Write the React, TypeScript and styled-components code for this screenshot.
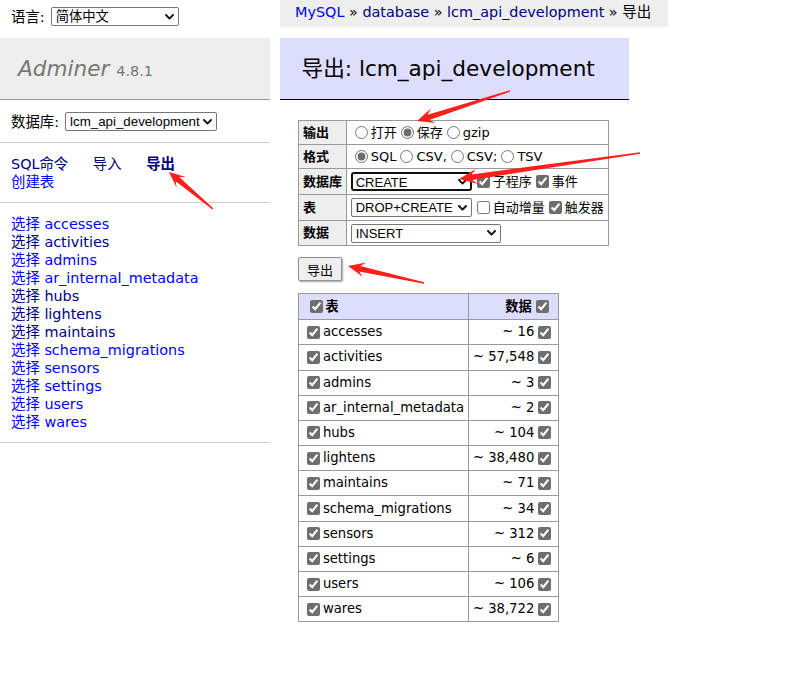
import React from "react";
import styled, { createGlobalStyle } from "styled-components";

const FONT = `"DejaVu Sans", "Noto Sans CJK SC", sans-serif`;
const SELECT_FONT = `"Liberation Sans", "Noto Sans CJK SC", sans-serif`;

const GlobalStyle = createGlobalStyle`
  html, body { margin: 0; padding: 0; background: #fff; }
  body {
    color: #000;
    font-family: ${FONT};
    font-size: 14.4px;
    line-height: 18px;
  }
`;

const Page = styled.div`
  position: relative;
  display: flex;
  align-items: flex-start;
  column-gap: 10px;
  width: 794px;
  min-height: 683px;
`;

/* ---------- left menu ---------- */

const Menu = styled.nav`
  flex: none;
  width: 270px;
`;

const LangBar = styled.div`
  display: flex;
  align-items: center;
  column-gap: 6px;
  height: 19px;
  padding: 7px 11px 12px;
  white-space: nowrap;
`;

const SelectBox = styled.span<{ $mr?: number }>`
  position: relative;
  display: inline-flex;
  flex: none;
  margin-right: ${(p) => p.$mr ?? 0}px;
`;

const Select = styled.select<{ $w: number; $fs: number; $focus?: boolean }>`
  appearance: none;
  -webkit-appearance: none;
  box-sizing: border-box;
  width: ${(p) => p.$w}px;
  height: 19px;
  margin: 0;
  padding: 0 14px 0 ${(p) => (p.$focus ? 3 : 4)}px;
  font-family: ${SELECT_FONT};
  font-size: ${(p) => p.$fs}px;
  line-height: 17px;
  color: #000;
  background: #fff;
  border: ${(p) => (p.$focus ? "2px solid #111" : "1px solid #767676")};
  border-radius: ${(p) => (p.$focus ? 3 : 2)}px;
  outline: none;
`;

const Chevron = styled.svg`
  position: absolute;
  right: 5px;
  top: 50%;
  width: 9px;
  height: 6px;
  margin-top: -3px;
  pointer-events: none;
`;

type DropProps = {
  w: number;
  fs: number;
  focus?: boolean;
  mr?: number;
  value: string;
  options: string[];
};

function Drop({ w, fs, focus, mr, value, options }: DropProps) {
  return (
    <SelectBox $mr={mr}>
      <Select $w={w} $fs={fs} $focus={focus} defaultValue={value}>
        {options.map((o) => (
          <option key={o} value={o}>
            {o}
          </option>
        ))}
      </Select>
      <Chevron viewBox="0 0 9 6">
        <path d="M1 1 L4.5 4.6 L8 1" fill="none" stroke="#111" strokeWidth="1.9" strokeLinecap="round" strokeLinejoin="round" />
      </Chevron>
    </SelectBox>
  );
}

const Logo = styled.h1`
  margin: 0;
  height: 27px;
  padding: 17px 18px 17px;
  font-size: 21.6px;
  line-height: 27px;
  font-weight: normal;
  color: #777;
  background: #eee;
  border-bottom: 1px solid #999;
  white-space: nowrap;
`;

const LogoLink = styled.a`
  color: #777;
  font-style: italic;
  text-decoration: none;
`;

const Version = styled.span`
  font-size: 14.4px;
  line-height: 1;
  color: #777;
`;

const MenuBlock = styled.div`
  padding: 12px 11px 11px;
  border-bottom: 1px solid #ccc;
`;

const FieldRow = styled.div`
  display: flex;
  align-items: center;
  column-gap: 6px;
  height: 19px;
  white-space: nowrap;
`;

const MenuLink = styled.a<{ $visited?: boolean; $active?: boolean }>`
  color: ${(p) => (p.$visited ? "#000080" : "#0000ff")};
  font-weight: ${(p) => (p.$active ? "bold" : "normal")};
  text-decoration: none;
  margin-right: 20px;
`;

const TableList = styled.ul`
  list-style: none;
  margin: 0;
  padding: 0;
`;

const TableItem = styled.li`
  white-space: nowrap;
`;

const ItemLink = styled.a<{ $visited?: boolean }>`
  color: ${(p) => (p.$visited ? "#000080" : "#0000ff")};
  text-decoration: none;
`;

/* ---------- main column ---------- */

const Main = styled.main`
  display: flex;
  flex-direction: column;
  align-items: flex-start;
`;

const Breadcrumb = styled.p`
  margin: 0;
  height: 27px;
  line-height: 25px;
  padding: 0 17px 0 15px;
  background: #eee;
  white-space: nowrap;
`;

const Crumb = styled.a<{ $visited?: boolean }>`
  color: ${(p) => (p.$visited ? "#000080" : "#0000ff")};
  text-decoration: none;
`;

const Content = styled.section`
  margin-top: 11px;
`;

const Title = styled.h2`
  margin: 0 0 20px;
  padding: 17px 21.6px 17px;
  font-size: 21.6px;
  line-height: 27px;
  font-weight: normal;
  color: #000;
  background: #ddf;
  border-bottom: 1px solid #000;
  white-space: nowrap;
`;

const Body = styled.div`
  padding: 0 20px 20px 18px;
`;

const Grid = styled.table<{ $fs: number }>`
  border-collapse: collapse;
  font-size: ${(p) => p.$fs}px;
  line-height: 16px;
`;

const Th = styled.th<{ $head?: boolean; $right?: boolean }>`
  border: 1px solid #999;
  background: ${(p) => (p.$head ? "#ddf" : "#eee")};
  padding: ${(p) => (p.$head ? "2.6px 6.5px" : "2.6px 3.9px")};
  text-align: ${(p) => (p.$right ? "right" : "left")};
  font-weight: bold;
  white-space: nowrap;
`;

const Td = styled.td`
  border: 1px solid #999;
  padding: 2.6px 3.9px;
  white-space: nowrap;
`;

const CellRow = styled.div<{ $h: number; $right?: boolean }>`
  display: flex;
  align-items: center;
  justify-content: ${(p) => (p.$right ? "flex-end" : "flex-start")};
  height: ${(p) => p.$h}px;
`;

const Choice = styled.label`
  display: inline-flex;
  align-items: center;
`;

const Radio = styled.input.attrs({ type: "radio" })`
  width: 13px;
  height: 13px;
  margin: 0 3px 0 4px;
  accent-color: #6e6e6e;
  flex: none;
`;

const Check = styled.input.attrs({ type: "checkbox" })`
  width: 13px;
  height: 13px;
  margin: 0 3px 0 4px;
  accent-color: #6e6e6e;
  flex: none;
`;

const SubmitBar = styled.div`
  display: flex;
  margin: 11px 0 12px;
`;

const Button = styled.button`
  box-sizing: border-box;
  width: 44px;
  height: 24px;
  padding: 0;
  font-family: ${FONT};
  font-size: 13px;
  color: #000;
  background: #efefef;
  border: 1px solid #8f8f8f;
  border-radius: 2px;
  box-shadow: 1px 1px 2px rgba(0, 0, 0, 0.35);
`;

const Overlay = styled.svg`
  position: absolute;
  left: 0;
  top: 0;
  pointer-events: none;
`;

const arrowPoints = (
  tx: number,
  ty: number,
  px: number,
  py: number,
  head = 17,
  hw = 7.5,
  sw = 2.8,
  tw = 0.7
) => {
  const dx = px - tx;
  const dy = py - ty;
  const L = Math.hypot(dx, dy);
  const ux = dx / L;
  const uy = dy / L;
  const nx = -uy;
  const ny = ux;
  const bx = px - ux * head;
  const by = py - uy * head;
  const cx = px - ux * (head - 5);
  const cy = py - uy * (head - 5);
  const pts = [
    [px, py],
    [bx + nx * hw, by + ny * hw],
    [cx + nx * sw, cy + ny * sw],
    [tx + nx * tw, ty + ny * tw],
    [tx - nx * tw, ty - ny * tw],
    [cx - nx * sw, cy - ny * sw],
    [bx - nx * hw, by - ny * hw],
  ];
  return pts.map((p) => p.map((v) => v.toFixed(1)).join(",")).join(" ");
};

const arrows = [
  { t: [510, 91], p: [417, 121], head: 17, hw: 7.5 },
  { t: [213, 209], p: [169, 172], head: 16, hw: 7 },
  { t: [640, 153], p: [459, 179], head: 18, hw: 7.5 },
  { t: [424, 283], p: [348, 266], head: 17, hw: 7.5 },
];

const tables: [string, string, boolean][] = [
  ["accesses", "16", false],
  ["activities", "57,548", true],
  ["admins", "3", false],
  ["ar_internal_metadata", "2", false],
  ["hubs", "104", true],
  ["lightens", "38,480", true],
  ["maintains", "71", true],
  ["schema_migrations", "34", false],
  ["sensors", "312", false],
  ["settings", "6", false],
  ["users", "106", false],
  ["wares", "38,722", false],
];

const CREATE_OPTS = ["", "DROP+CREATE", "CREATE"];
const DATA_OPTS = ["", "TRUNCATE+INSERT", "INSERT", "INSERT+UPDATE"];

export default function App() {
  return (
    <Page>
      <GlobalStyle />
      <Menu>
        <LangBar>
          <span>语言:</span>
          <Drop w={128} fs={13.33} value="简体中文" options={["简体中文", "English"]} />
        </LangBar>
        <Logo>
          <LogoLink href="#">Adminer</LogoLink> <Version>4.8.1</Version>
        </Logo>
        <MenuBlock>
          <FieldRow>
            <span>数据库:</span>
            <Drop w={152} fs={13.33} value="lcm_api_development" options={["lcm_api_development"]} />
          </FieldRow>
        </MenuBlock>
        <MenuBlock>
          <MenuLink $visited href="#">SQL命令</MenuLink>{" "}
          <MenuLink $visited href="#">导入</MenuLink>{" "}
          <MenuLink $visited $active href="#">导出</MenuLink>
          <br />
          <MenuLink href="#">创建表</MenuLink>
        </MenuBlock>
        <MenuBlock>
          <TableList>
            {tables.map(([name, , visited]) => (
              <TableItem key={name}>
                <ItemLink $visited={visited} href="#">选择</ItemLink>{" "}
                <ItemLink $visited={visited} href="#">{name}</ItemLink>
              </TableItem>
            ))}
          </TableList>
        </MenuBlock>
      </Menu>

      <Main>
        <Breadcrumb>
          <Crumb href="#">MySQL</Crumb> » <Crumb $visited href="#">database</Crumb> »{" "}
          <Crumb $visited href="#">lcm_api_development</Crumb> » 导出
        </Breadcrumb>
        <Content>
          <Title>导出: lcm_api_development</Title>
          <Body>
            <Grid $fs={13}>
              <tbody>
                <tr>
                  <Th>输出</Th>
                  <Td>
                    <CellRow $h={18}>
                      <Choice><Radio name="output" />打开</Choice>
                      <Choice><Radio name="output" defaultChecked />保存</Choice>
                      <Choice><Radio name="output" />gzip</Choice>
                    </CellRow>
                  </Td>
                </tr>
                <tr>
                  <Th>格式</Th>
                  <Td>
                    <CellRow $h={18}>
                      <Choice><Radio name="format" defaultChecked />SQL</Choice>
                      <Choice><Radio name="format" />CSV,</Choice>
                      <Choice><Radio name="format" />CSV;</Choice>
                      <Choice><Radio name="format" />TSV</Choice>
                    </CellRow>
                  </Td>
                </tr>
                <tr>
                  <Th>数据库</Th>
                  <Td>
                    <CellRow $h={19.5}>
                      <Drop w={121} fs={13} focus mr={1} value="CREATE" options={CREATE_OPTS} />
                      <Choice><Check defaultChecked />子程序</Choice>
                      <Choice><Check defaultChecked />事件</Choice>
                    </CellRow>
                  </Td>
                </tr>
                <tr>
                  <Th>表</Th>
                  <Td>
                    <CellRow $h={20}>
                      <Drop w={121} fs={13} mr={1} value="DROP+CREATE" options={CREATE_OPTS} />
                      <Choice><Check />自动增量</Choice>
                      <Choice><Check defaultChecked />触发器</Choice>
                    </CellRow>
                  </Td>
                </tr>
                <tr>
                  <Th>数据</Th>
                  <Td>
                    <CellRow $h={19}>
                      <Drop w={150} fs={13} value="INSERT" options={DATA_OPTS} />
                    </CellRow>
                  </Td>
                </tr>
              </tbody>
            </Grid>

            <SubmitBar>
              <Button type="button">导出</Button>
            </SubmitBar>

            <Grid $fs={13.2}>
              <thead>
                <tr>
                  <Th $head>
                    <CellRow $h={19.5}>
                      <Check defaultChecked />表
                    </CellRow>
                  </Th>
                  <Th $head $right>
                    <CellRow $h={19.5} $right>
                      数据<Check defaultChecked />
                    </CellRow>
                  </Th>
                </tr>
              </thead>
              <tbody>
                {tables.map(([name, rows]) => (
                  <tr key={name}>
                    <Td>
                      <CellRow $h={19}>
                        <Check defaultChecked />
                        {name}
                      </CellRow>
                    </Td>
                    <Td>
                      <CellRow $h={19} $right>
                        ~ {rows}
                        <Check defaultChecked />
                      </CellRow>
                    </Td>
                  </tr>
                ))}
              </tbody>
            </Grid>
          </Body>
        </Content>
      </Main>

      <Overlay width={794} height={683} viewBox="0 0 794 683">
        {arrows.map((a, i) => (
          <polygon
            key={i}
            points={arrowPoints(a.t[0], a.t[1], a.p[0], a.p[1], a.head, a.hw)}
            fill="#ff1f1a"
          />
        ))}
      </Overlay>
    </Page>
  );
}
